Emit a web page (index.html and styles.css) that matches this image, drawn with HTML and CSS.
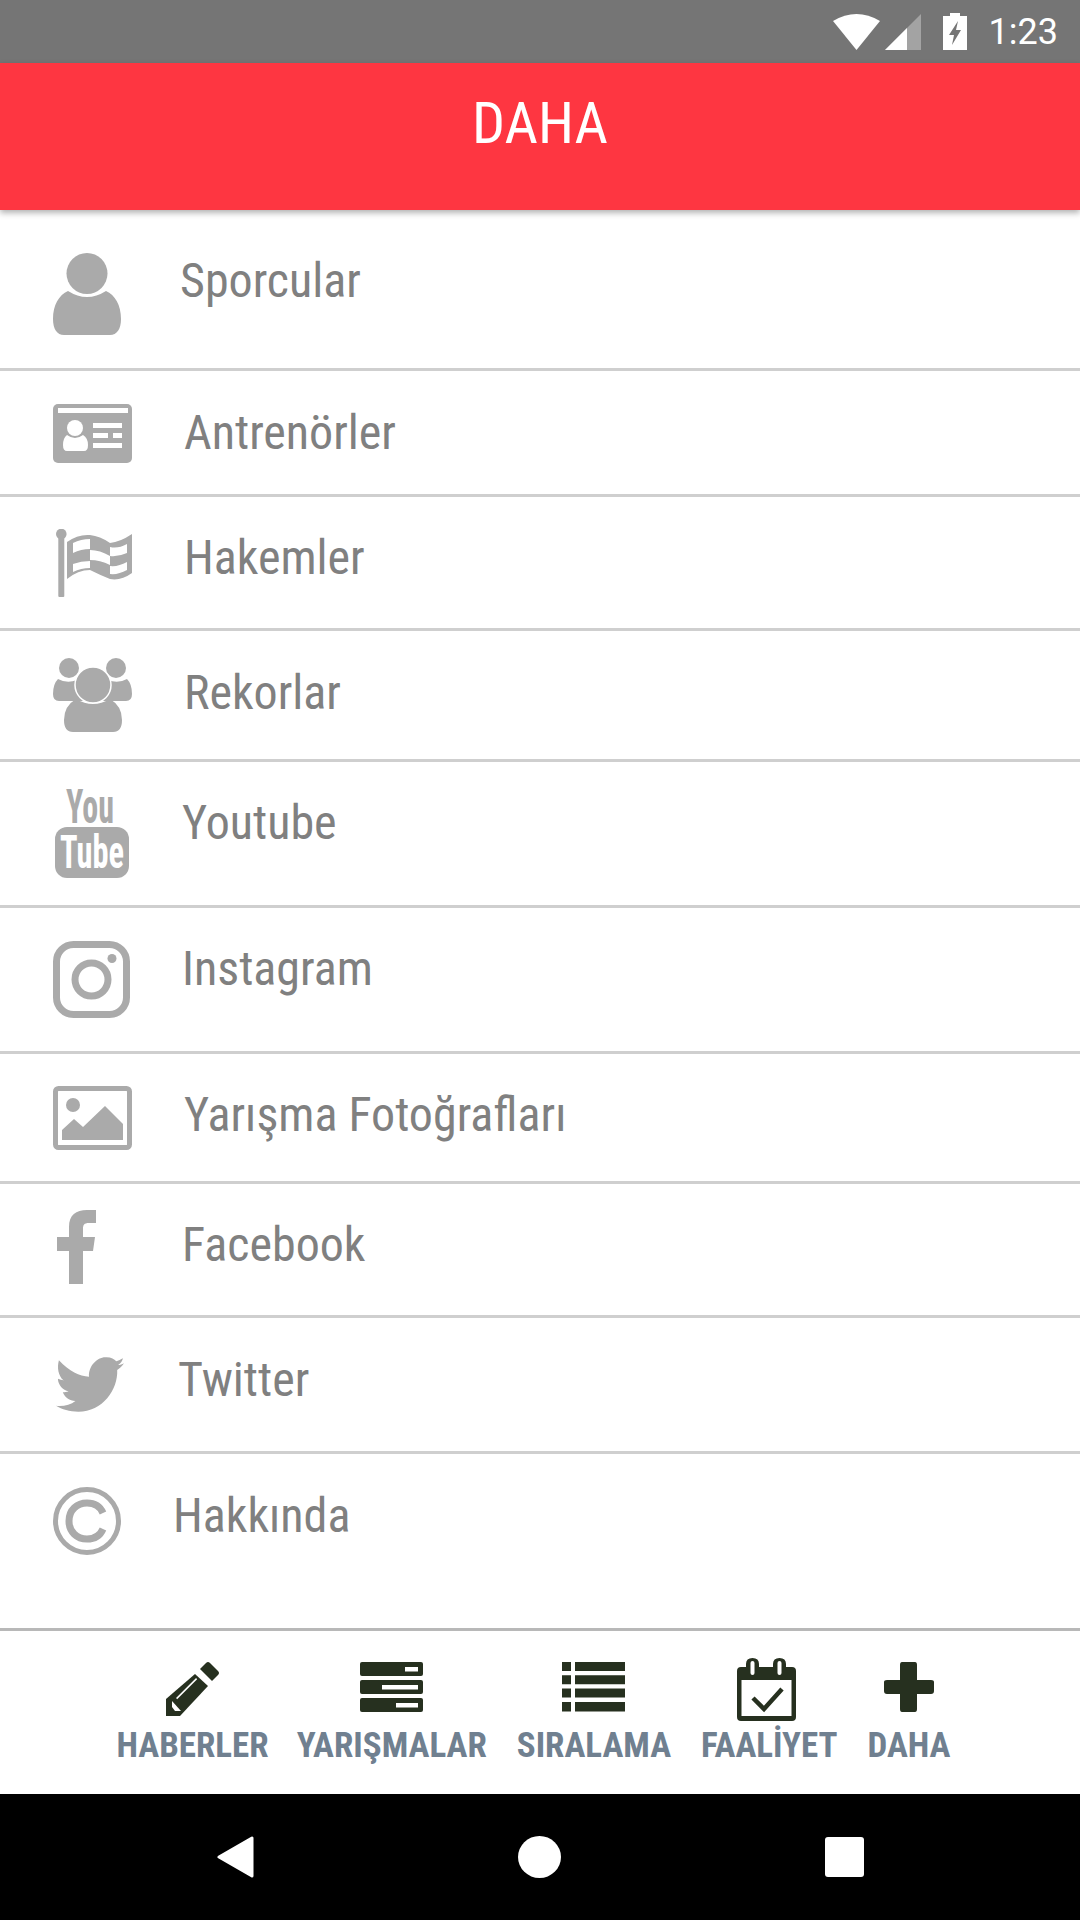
FILE: index.html
```html
<!DOCTYPE html>
<html>
<head>
<meta charset="utf-8">
<title>Daha</title>
<link rel="stylesheet" href="styles.css">
</head>
<body>
<div class="statusbar">
  <svg class="st-icons" width="88" height="36" viewBox="0 0 88 36">
    <path d="M0 7 Q23.500 -7 47 7 L23.500 36 Z" fill="#fff"/>
    <path d="M52 36 L88 0 V36 Z" fill="#a3a3a3"/>
    <path d="M52 36 L74 14 V36 Z" fill="#fff"/>
  </svg>
  <svg class="st-batt" width="24" height="37" viewBox="0 0 24 37">
    <path d="M7 0H17V3H24V37H0V3H7Z" fill="#fff"/>
    <path d="M15 8 L6 22H11L9 32 L18 17H13Z" fill="#757575"/>
  </svg>
  <span class="st-time">1:23</span>
</div>
<div class="appbar"><span class="cond">DAHA</span></div>
<div class="list">
  <div class="row r1">
    <div class="cell"><svg width="68" height="82" viewBox="0 0 68 82"><circle cx="34" cy="20.500" r="20.500" fill="#aaa"/><path d="M15 38 Q34 50 53 38 C62 42 68 52 68 66 C68 76 64 82 57 82 H11 C4 82 0 76 0 66 C0 52 6 42 15 38Z" fill="#aaa"/></svg></div>
    <span class="cond lbl">Sporcular</span>
  </div>
  <div class="row r2">
    <div class="cell"><svg width="79" height="59" viewBox="0 0 79 59"><rect width="79" height="59" rx="5" fill="#aaa"/><rect x="5" y="4" width="70" height="5" fill="#fff"/><circle cx="22" cy="24" r="8" fill="#fff"/><path d="M14 31Q22 37 30 31Q35 34 35 41Q35 47 31 47H14Q10 47 10 41Q10 34 14 31Z" fill="#fff"/><rect x="40" y="19" width="29" height="5" fill="#fff"/><rect x="40" y="29" width="15" height="5" fill="#fff"/><rect x="60" y="29" width="9" height="5" fill="#fff"/><rect x="40" y="39" width="29" height="5" fill="#fff"/></svg></div>
    <span class="cond lbl">Antrenörler</span>
  </div>
  <div class="row r3">
    <div class="cell"><svg width="76" height="68" viewBox="0 0 76 68"><circle cx="5.300" cy="5" r="5.300" fill="#aaa"/><rect x="2.300" y="6" width="6" height="62" rx="1" fill="#aaa"/><path d="M11 13 Q22 5 34 6 Q44 7 54 14 Q64 13 76 5 V44 Q65 52 54 50 Q44 46 34 41 Q22 41 11 50Z" fill="#aaa"/><path d="M17 14 Q25 10 34 10 V20 Q25 20 17 24Z M17 35 Q25 32 34 32 V39 Q25 39 17 43Z M34 21 Q44 21 54 27 V36 Q44 31 34 31Z M54 18 Q62 20 71 15 V24 Q62 28 54 27Z M54 37 Q62 38 71 33 V41 Q62 46 54 45Z" fill="#fff"/></svg></div>
    <span class="cond lbl">Hakemler</span>
  </div>
  <div class="row r4">
    <div class="cell"><svg width="79" height="74" viewBox="0 0 79 74"><circle cx="16" cy="10" r="10" fill="#aaa"/><circle cx="63" cy="10" r="10" fill="#aaa"/><path d="M5 21Q14 26 24 22L30 43H6Q0 43 0 36Q0 26 5 21ZM74 21Q65 26 55 22L49 43H73Q79 43 79 36Q79 26 74 21Z" fill="#aaa"/><circle cx="40" cy="27" r="18" fill="#aaa" stroke="#fff" stroke-width="1.500"/><path d="M23 41Q40 51 57 41Q69 48 69 62Q69 74 60 74H20Q11 74 11 62Q11 48 23 41Z" fill="#aaa"/></svg></div>
    <span class="cond lbl">Rekorlar</span>
  </div>
  <div class="row r5">
    <div class="cell"><svg class="yt" width="74" height="90" viewBox="0 0 74 90"><text x="11" y="35" font-size="48" textLength="48" lengthAdjust="spacingAndGlyphs" fill="#aaa">You</text><rect y="39" width="74" height="51" rx="12" fill="#aaa"/><text x="5" y="80" font-size="46" textLength="64" lengthAdjust="spacingAndGlyphs" fill="#fff">Tube</text></svg></div>
    <span class="cond lbl">Youtube</span>
  </div>
  <div class="row r6">
    <div class="cell"><svg width="77" height="77" viewBox="0 0 77 77"><rect x="3.500" y="3.500" width="70" height="70" rx="17" fill="none" stroke="#aaa" stroke-width="7"/><circle cx="38.500" cy="38.500" r="16.500" fill="none" stroke="#aaa" stroke-width="7"/><circle cx="59" cy="17.500" r="4.500" fill="#aaa"/></svg></div>
    <span class="cond lbl">Instagram</span>
  </div>
  <div class="row r7">
    <div class="cell"><svg width="79" height="64" viewBox="0 0 79 64"><rect x="2.500" y="2.500" width="74" height="59" rx="3" fill="none" stroke="#aaa" stroke-width="5"/><circle cx="20" cy="19" r="7" fill="#aaa"/><path d="M9 54V44L21 33L30 41L52 20L70 38V54Z" fill="#aaa"/></svg></div>
    <span class="cond lbl">Yarışma Fotoğrafları</span>
  </div>
  <div class="row r8">
    <div class="cell"><svg width="39" height="74" viewBox="0 0 39 74"><path d="M12 74V41H0V27H12V17C12 5 19 0 30 0H39V13H32C27 13 26 15 26 19V27H38L36 41H26V74Z" fill="#aaa"/></svg></div>
    <span class="cond lbl">Facebook</span>
  </div>
  <div class="row r9">
    <div class="cell"><svg width="68" height="57" viewBox="0 0 70 58"><path d="M3 4C14 16 24 20 34 21C33 10 43 0 52 1C57 1 60 3 62 5C64 5 67 3 69 2C68 5 67 7 64 9C66 9 68 8 70 7C68 10 66 12 63 14C64 34 48 57 23 57C14 57 6 55 0 51C7 52 15 50 20 46C14 46 9 42 7 37C9 37 11 37 13 36C7 35 2 29 2 23C4 24 6 24 8 25C2 20 1 11 3 4Z" fill="#aaa"/></svg></div>
    <span class="cond lbl">Twitter</span>
  </div>
  <div class="row r10">
    <div class="cell"><svg width="68" height="68" viewBox="0 0 68 68"><circle cx="34" cy="34" r="31.500" fill="none" stroke="#aaa" stroke-width="5"/><path d="M50 26C47 19 41 16 34 16C24 16 16 23 16 34C16 45 24 52 34 52C41 52 47 49 50 42" fill="none" stroke="#aaa" stroke-width="7"/></svg></div>
    <span class="cond lbl">Hakkında</span>
  </div>
</div>
<div class="tabs">
  <div class="tab t1">
    <div class="tab-icon"><svg width="53" height="54" viewBox="0 0 53 54"><path d="M34 7L40 1Q42 -1 44 1L52 9Q54 11 52 13L46 19Z" fill="#26301f"/><path d="M29 12L42 24L14 54H0V37Z" fill="#26301f"/><path d="M30.600 16.600L10.600 36.600" stroke="#fff" stroke-width="1.500"/><path d="M6 39L15 49H9L6 45Z" fill="#fff"/></svg></div>
    <span class="tab-lbl">HABERLER</span>
  </div>
  <div class="tab">
    <div class="tab-icon"><svg width="63" height="50" viewBox="0 0 63 50"><rect width="63" height="14" rx="2" fill="#26301f"/><rect y="18" width="63" height="14" rx="2" fill="#26301f"/><rect y="36" width="63" height="14" rx="2" fill="#26301f"/><rect x="45" y="5" width="13" height="4.500" fill="#fff"/><rect x="22" y="23" width="36" height="4.500" fill="#fff"/><rect x="36" y="41" width="22" height="4.500" fill="#fff"/></svg></div>
    <span class="tab-lbl">YARIŞMALAR</span>
  </div>
  <div class="tab">
    <div class="tab-icon"><svg width="63" height="50" viewBox="0 0 63 50"><path d="M0 0H9V9H0ZM13 0H63V9H13ZM0 13.300H9V22.300H0ZM13 13.300H63V22.300H13ZM0 26.600H9V35.600H0ZM13 26.600H63V35.600H13ZM0 40H9V49.500H0ZM13 40H63V49.500H13Z" fill="#26301f"/></svg></div>
    <span class="tab-lbl">SIRALAMA</span>
  </div>
  <div class="tab">
    <div class="tab-icon tall"><svg width="59" height="63" viewBox="0 0 59 63"><path d="M4 9H9V6Q9 0 15.500 0Q22 0 22 6V9H36V6Q36 0 42.500 0Q49 0 49 6V9H55Q59 9 59 13V59Q59 63 55 63H4Q0 63 0 59V13Q0 9 4 9Z" fill="#26301f"/><rect x="13.500" y="3" width="4" height="14" rx="2" fill="#fff"/><rect x="40.500" y="3" width="4" height="14" rx="2" fill="#fff"/><rect x="4.500" y="22" width="50" height="36" fill="#fff"/><path d="M16 40L27 51L45 31" fill="none" stroke="#26301f" stroke-width="4.500"/></svg></div>
    <span class="tab-lbl">FAALİYET</span>
  </div>
  <div class="tab">
    <div class="tab-icon"><svg width="50" height="50" viewBox="0 0 50 50"><path d="M18 0H31Q33 0 33 3V18H47Q50 18 50 20V29Q50 32 47 32H33V47Q33 50 31 50H18Q16 50 16 47V32H3Q0 32 0 29V20Q0 18 3 18H16V3Q16 0 18 0Z" fill="#26301f"/></svg></div>
    <span class="tab-lbl">DAHA</span>
  </div>
</div>
<div class="navbar">
  <svg width="37" height="42" viewBox="0 0 37 42"><path d="M35 2V40L2 21Z" fill="#fff" stroke="#fff" stroke-width="3" stroke-linejoin="round"/></svg>
  <span class="nav-home"></span>
  <span class="nav-recent"></span>
</div>
</body>
</html>
```

FILE: styles.css
```css
* { box-sizing: border-box; }
html, body { margin: 0; padding: 0; }
body {
    width: 1080px;
    height: 1920px;
    display: flex;
    flex-direction: column;
    background: #fff;
    font-family: "Roboto", "Liberation Sans", sans-serif;
    overflow: hidden;
}
.cond {
    font-stretch: 75%;
    display: inline-block;
}

.statusbar {
    height: 63px;
    background: #757575;
    display: flex;
    align-items: center;
    justify-content: flex-end;
    padding-right: 22px;
    color: #fff;
}
.st-icons { margin-right: 22px; }
.st-batt { margin-right: 22px; }
.st-time { font-size: 36px; }

.appbar {
    height: 147px;
    background: #fe3641;
    color: #fff;
    display: flex;
    align-items: center;
    justify-content: center;
    font-size: 58px;
    padding-bottom: 28px;
    box-shadow: 0 3px 6px rgba(0,0,0,.3);
    position: relative;
}

.list { display: flex; flex-direction: column; }
.row {
    display: flex;
    align-items: flex-start;
    border-bottom: 3px solid #cfcfcf;
    color: #808080;
    font-size: 48px;
}
.cell { flex: none; display: flex; }
.lbl {
    white-space: nowrap;
    line-height: 56px;
    margin-top: 33px;
}
.r1 { height: 161px; }
.r2 { height: 126px; }
.r3 { height: 134px; }
.r4 { height: 131px; }
.r5 { height: 146px; }
.r6 { height: 146px; }
.r7 { height: 130px; }
.r8 { height: 134px; }
.r9 { height: 136px; }
.r10 { height: 177px; border-bottom-color: #b8b8b8; }
.r1 .lbl { margin-top: 43px; }
.r2 .lbl, .r4 .lbl, .r9 .lbl, .r10 .lbl { margin-top: 34px; }
.r1 .cell { width: 180px; padding: 43px 0 0 53px; }
.r2 .cell { width: 184px; padding: 33px 0 0 53px; }
.r3 .cell { width: 184px; padding: 32px 0 0 56px; }
.r4 .cell { width: 184px; padding: 27px 0 0 53px; }
.r5 .cell { width: 182px; padding: 26px 0 0 55px; }
.r6 .cell { width: 182px; padding: 33px 0 0 53px; }
.r7 .cell { width: 184px; padding: 32px 0 0 53px; }
.r8 .cell { width: 182px; padding: 26px 0 0 57px; }
.r9 .cell { width: 178px; padding: 38px 0 0 56px; }
.r10 .cell { width: 173px; padding: 33px 0 0 53px; }

.yt { overflow: visible; }
.yt text {
    font-family: "Roboto", sans-serif;
    font-weight: 700;
    font-stretch: 75%;
}

.tabs {
    height: 163px;
    display: flex;
    justify-content: center;
    padding: 26px 13px 0 0;
    gap: 30px;
}
.tab {
    display: flex;
    flex-direction: column;
    align-items: center;
}
.t1 { margin-right: -2px; }
.tab-icon {
    height: 64px;
    padding-top: 5px;
    margin-bottom: 7px;
}
.tab-icon.tall { padding-top: 1px; margin-right: 6px; }
.tab-lbl {
    font-size: 35px;
    font-weight: 700;
    font-stretch: 75%;
    color: #708090;
    line-height: 36px;
    white-space: nowrap;
}

.navbar {
    height: 126px;
    background: #000;
    display: flex;
    align-items: center;
    justify-content: center;
    gap: 264px;
}
.nav-home { width: 43px; height: 42px; border-radius: 50%; background: #fff; }
.nav-recent { width: 39px; height: 40px; border-radius: 3px; background: #fff; }
```
